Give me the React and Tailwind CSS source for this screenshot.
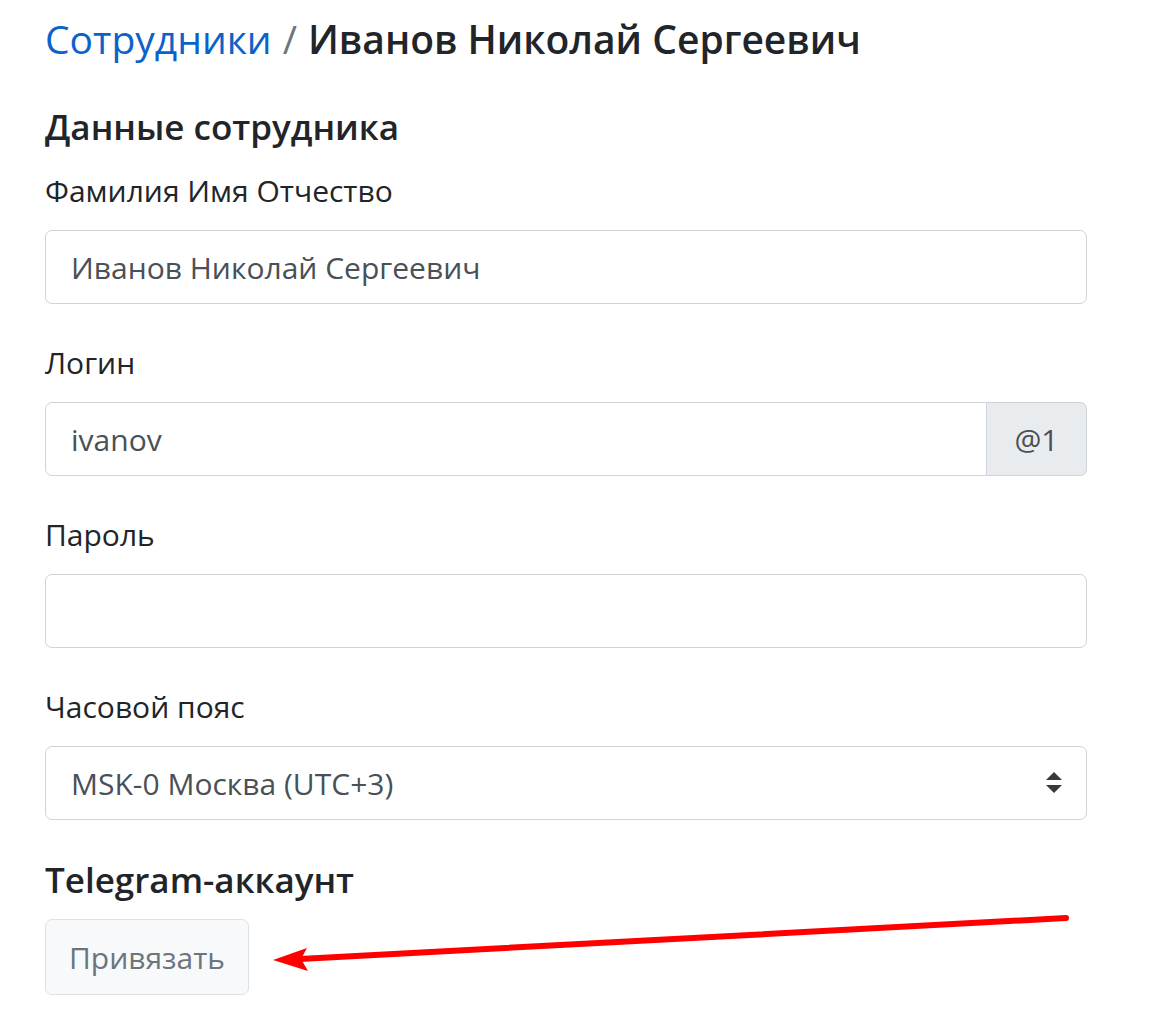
const FONT = { fontFamily: "'Open Sans', 'Noto Sans', sans-serif" };

const Field = ({ label, children }) => (
  <div className="mb-[38px]">
    <div className="h-[40px] flex items-center text-[30px] text-[#212529]">{label}</div>
    <div className="mt-[20px]">{children}</div>
  </div>
);

const inputCls =
  "w-full h-[74px] px-[25px] rounded-[7px] border border-[#ced4da] bg-white text-[30px] text-[#495057] outline-none";

export default function App() {
  return (
    <div className="relative min-h-screen bg-white px-[45px] pt-[13px] w-[1132px]" style={FONT}>
      <h1 className="h-[50px] flex items-center text-[39px] font-semibold text-[#212529] leading-none">
        <span className="text-[#0b62c8] font-normal">Сотрудники</span>
        <span className="text-[#6c757d] font-normal mx-[11px]">/</span>
        <span>Иванов Николай Сергеевич</span>
      </h1>

      <h2 className="mt-[44px] h-[40px] flex items-center text-[35px] font-semibold text-[#212529]">
        Данные сотрудника
      </h2>

      <div className="mt-[23px]">
        <Field label="Фамилия Имя Отчество">
          <input className={inputCls} defaultValue="Иванов Николай Сергеевич" style={FONT} />
        </Field>

        <Field label="Логин">
          <div className="flex h-[74px]">
            <input
              className="flex-1 min-w-0 h-full px-[25px] rounded-l-[7px] border border-[#ced4da] bg-white text-[30px] text-[#495057] outline-none"
              defaultValue="ivanov"
              style={FONT}
            />
            <div className="w-[100px] h-full flex items-center justify-center rounded-r-[7px] border border-l-0 border-[#ced4da] bg-[#e9ecef] text-[30px] text-[#495057]">
              @1
            </div>
          </div>
        </Field>

        <Field label="Пароль">
          <input className={inputCls} type="password" style={FONT} />
        </Field>

        <Field label="Часовой пояс">
          <div className="relative">
            <div className={inputCls + " flex items-center"}>MSK-0 Москва (UTC+3)</div>
            <svg className="absolute right-[25px] top-[26px]" width="16" height="22" viewBox="0 0 16 22">
              <path d="M8 0 L16 8 L0 8 Z" fill="#343a40" />
              <path d="M0 13 L16 13 L8 21 Z" fill="#343a40" />
            </svg>
          </div>
        </Field>
      </div>

      <h2 className="-mt-[38px] pt-[40px] h-[80px] flex items-end text-[35px] font-semibold text-[#212529]">
        <span className="h-[40px] flex items-center">Telegram-аккаунт</span>
      </h2>

      <button
        className="mt-[19px] h-[76px] w-[204px] rounded-[7px] border border-[#dee2e6] bg-[#f8f9fa] text-[30px] text-[#6c757d]"
        style={FONT}
      >
        Привязать
      </button>

      <svg className="absolute left-0 top-0 pointer-events-none" width="1156" height="1020">
        <line x1="1066" y1="918" x2="300" y2="959" stroke="#ff0000" strokeWidth="6" strokeLinecap="round" />
        <path d="M273 960 L307 948 L301 959 L308 971 Z" fill="#ff0000" />
      </svg>
    </div>
  );
}
